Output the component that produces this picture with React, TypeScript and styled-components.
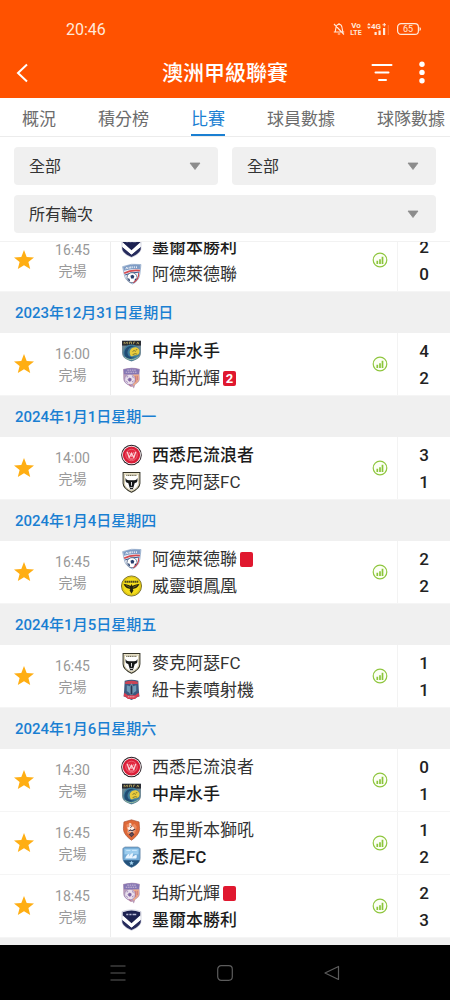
import React, { useLayoutEffect, useRef, useState } from "react";
import styled, { createGlobalStyle } from "styled-components";

const GlobalStyle = createGlobalStyle`
  *, *::before, *::after { box-sizing: border-box; }
  html, body, #root { height: 100%; }
  body {
    margin: 0;
    background: #fff;
    color: #222;
    font-family: Roboto, "Noto Sans CJK TC", sans-serif;
  }
  button, select { font-family: inherit; color: inherit; }
  button { border: 0; padding: 0; background: none; cursor: pointer; }
`;

const Screen = styled.div`
  display: flex;
  flex-direction: column;
  height: 100%;
  min-height: 480px;
`;

const Header = styled.header`
  flex: none;
  background: #ff5200;
  color: #fff;
`;

const StatusBar = styled.div`
  display: flex;
  align-items: center;
  justify-content: space-between;
  height: 48px;
  padding: 10px 28px 0 66px;
  font-size: 16px;
  color: #ffe9da;
`;

const StatusIcons = styled.div`
  display: flex;
  align-items: center;
  gap: 5px;
`;

const AppBar = styled.div`
  display: grid;
  grid-template-columns: 88px 1fr 88px;
  align-items: center;
  height: 50px;
`;

const Title = styled.h1`
  margin: 0;
  font-size: 21px;
  line-height: 28px;
  font-weight: 500;
  text-align: center;
  white-space: nowrap;
`;

const BarActions = styled.div<{ $end?: boolean }>`
  display: flex;
  align-items: center;
  justify-content: ${(p) => (p.$end ? "flex-end" : "flex-start")};
  gap: 17px;
  padding: 0 16px;
`;

const IconButton = styled.button`
  display: flex;
  align-items: center;
  justify-content: center;
  flex: none;
`;

const Tabs = styled.nav`
  display: flex;
  flex: none;
  gap: 42px;
  height: 39px;
  padding: 0 22px;
  overflow: hidden;
  border-bottom: 1px solid #ececec;
`;

const Tab = styled.a<{ $active?: boolean }>`
  flex: none;
  height: 39px;
  padding-top: 9px;
  font-size: 17px;
  line-height: 24px;
  text-decoration: none;
  color: ${(p) => (p.$active ? "#1a7fd2" : "#6c6c6c")};
  border-bottom: 3px solid ${(p) => (p.$active ? "#1a7fd2" : "transparent")};
`;

const Filters = styled.form`
  display: grid;
  grid-template-columns: 1fr 1fr;
  flex: none;
  gap: 10px 14px;
  padding: 10px 14px 8px;
  border-bottom: 1px solid #f2f2f2;
`;

const SelectBox = styled.label<{ $wide?: boolean }>`
  display: grid;
  grid-template-columns: 1fr 46px;
  align-items: center;
  grid-column: ${(p) => (p.$wide ? "1 / -1" : "auto")};
  height: 38px;
  border-radius: 4px;
  background: #f0f0f0;

  svg {
    grid-area: 1 / 2;
    justify-self: center;
    pointer-events: none;
  }
`;

const Select = styled.select`
  grid-area: 1 / 1 / 2 / 3;
  width: 100%;
  height: 38px;
  padding: 0 15px;
  border: 0;
  background: transparent;
  appearance: none;
  font-size: 16px;
  color: #333;
`;

const MatchList = styled.main`
  flex: 1;
  min-height: 0;
  overflow-y: auto;
  scrollbar-width: none;
  padding-bottom: 8px;
  background: #f0f0f0;
`;

const DateHeading = styled.h2`
  margin: 0;
  height: 41px;
  padding: 1px 15px 0;
  font-size: 15px;
  line-height: 41px;
  font-weight: 500;
  color: #1a7fd2;
  background: #f0f0f0;
`;

const MatchRow = styled.article`
  display: grid;
  grid-template-columns: 48px 62px 1fr 34px 53px;
  height: 63px;
  background: #fff;
  border-bottom: 1px solid #f5f5f5;
`;

const Centered = styled.div`
  display: flex;
  align-items: center;
  justify-content: center;
`;

const Kickoff = styled.div`
  padding: 11px 13px 0 0;
  font-size: 14px;
  line-height: 21px;
  text-align: center;
  color: #999;
`;

const Teams = styled.div`
  padding: 5px 0 0 10px;
  border-left: 1px solid #ededed;
`;

const Team = styled.div<{ $winner?: boolean }>`
  display: flex;
  align-items: center;
  height: 27px;
  font-size: 17px;
  line-height: 27px;
  white-space: nowrap;
  color: ${(p) => (p.$winner ? "#1c1c1c" : "#333")};
  font-weight: ${(p) => (p.$winner ? 500 : 400)};

  svg { flex: none; margin: 0 10px 2px 0; }
`;

const RedCard = styled.span`
  display: block;
  width: 13px;
  height: 15px;
  margin-left: 3px;
  border-radius: 2px;
  background: #e0182f;
  color: #fff;
  font-size: 13px;
  line-height: 15px;
  font-weight: 700;
  text-align: center;
`;

const Scores = styled.div`
  padding-top: 5px;
  border-left: 1px solid #f3f3f3;
  font-size: 17px;
  line-height: 27px;
  font-weight: 500;
  text-align: center;
  color: #222;
`;

const SystemNav = styled.footer`
  display: grid;
  grid-template-columns: repeat(3, 107px);
  justify-content: center;
  align-items: center;
  flex: none;
  height: 55px;
  background: #000;
`;

type Crest =
  | "victory" | "adelaide" | "mariners" | "perth" | "wanderers"
  | "macarthur" | "wellington" | "jets" | "roar" | "sydney";

const SHIELD = "M2 1h16v10c0 4-3 6.500-8 8.700C5 17.500 2 15 2 11z";

const crests: Record<Crest, React.ReactNode> = {
  victory: (
    <>
      <path d="M1 2Q10-1.200 19 2V11c0 4-4 6.800-9 8.800C5 17.800 1 15 1 11z" fill="#f6f6fa" stroke="#a9abc2" strokeWidth=".5" />
      <path d="M1.700 2.500Q10-.5 18.300 2.500v4L10 14 1.700 6.500z" fill="#1c2150" />
      <path d="M1.200 9.800l8.800 7.400 8.800-7.400v2.400c-1 3.500-4.800 5.600-8.800 7.400-4-1.800-7.800-3.900-8.800-7.400z" fill="#262b5c" />
      <path d="M1.500 5.500l8.500 7.500 8.500-7.500V10L10 17.200 1.500 10z" fill="#fff" />
      <path d="M5 4.800h2m1 0h2m1 0h3.500" stroke="#b9bdd8" strokeWidth="1.400" />
    </>
  ),
  adelaide: (
    <>
      <path d="M1.500 3q8.500-3.500 17.500-2l-1 9c-.6 5-3.500 7.800-7 9.500C7 17.500 3.800 15.500 3 10z" fill="#eef2f8" stroke="#8ba3c4" strokeWidth=".7" />
      <path d="M2 3.300q8-3.300 16.500-1.800l-.3 4q-8-1-15.400 1.500z" fill="#7f9cc5" />
      <path d="M4.500 5.500l1-2 1.100 1.700m1.200-.3V3.100m1.400 1.600V2.800m1.500 1.600V2.700m2 1.700V2.700m2 1.700V2.700" stroke="#fff" strokeWidth=".8" fill="none" />
      <path d="M3 9.300q6.500-3.500 15-2.500" stroke="#d64b50" strokeWidth="1.600" fill="none" />
      <path d="M4 11q6-3 13.500-2.700" stroke="#37598d" strokeWidth="1" fill="none" />
      <circle cx="10.500" cy="13.500" r="4.800" fill="#fff" stroke="#536685" strokeWidth=".8" />
      <path d="M9 11.700l2-1 1.700 1.300-.7 2.200H9.600zM6.300 14l1.800.5.500 2-1 .5zM14.700 14l-1.500.8-.3 2 1.200-.5z" fill="#253e6d" />
      <path d="M16.800 9c.4 4-1.500 7-5 9.300" stroke="#c9464f" strokeWidth="1" fill="none" />
    </>
  ),
  mariners: (
    <>
      <path d="M1 .3h18V12c0 4-4 6.700-9 8C5 18.700 1 16 1 12z" fill="#6d8794" />
      <path d="M1 .3h18v4.500H1z" fill="#27292f" />
      <path d="M3 3.500V1.500l1.500 1.200L6 1.500v2m2 0v-2h2v2m2 0v-2h1.500m1.500 2l1-2 1 2" stroke="#c9b765" strokeWidth=".7" fill="none" />
      <circle cx="10" cy="11.500" r="7.800" fill="#3e7d9b" />
      <path d="M3.500 14C2 7.500 8 3.200 13.500 5.700c-4-.2-7 2-7.300 5.600-.3 3.200 3 5.700 6.800 4.700-3 2.500-8 1.500-9.500-2z" fill="#214c74" />
      <path d="M8.500 12.500c-1-4 3-7 6.500-5.800 2.700 1 3.300 4 2 6-1.700 2.400-4.200.6-6 2.300-1.500.4-2.300-.8-2.500-2.500z" fill="#e9cc3d" />
      <path d="M11 10.500l1.500-1 1.500 1m-3 3l2.500-1 2 .6m-1.500-4l1.500-.5" stroke="#7b772f" strokeWidth=".9" fill="none" />
      <path d="M4 16c3 3 9 3 12.500-.7" stroke="#a3bfa0" strokeWidth=".9" fill="none" />
    </>
  ),
  perth: (
    <>
      <path d="M2 1.500Q6 .3 10 .2t8 1.300l-.5 3.500.3 6c0 3-2.800 4-4.300 5.500L12.300 20l-1.500-2-1.800.3C7 16.500 2.500 15 2.200 11z" fill="#b99ab8" />
      <path d="M2.500 2Q10-.5 17.500 2l-.3 4.500H2.800z" fill="#8577b4" />
      <path d="M4.500 4.500h11M6 2.500h8" stroke="#dcc9df" strokeWidth=".8" strokeDasharray="1.500 .7" />
      <path d="M11 7l6-.3v4.800c-.5 3-3.700 4-4.500 6l-2-2z" fill="#efac87" />
      <circle cx="8.500" cy="11.500" r="5" fill="#eadfeb" stroke="#9a86b5" strokeWidth=".7" />
      <path d="M8 10l1.700.7-.2 2-1.800.3-1-1.600zM5.500 9l1.300-.3m3.700-.2l1.500 1.200M5 13l1.500 1.300m4-.5l1.500-1" fill="#7c64a3" stroke="#7c64a3" strokeWidth=".7" />
      <path d="M14 8v6m1.500-6v4m-8 4l2.500 2" stroke="#bd657a" strokeWidth=".7" fill="none" />
    </>
  ),
  wanderers: (
    <>
      <circle cx="10" cy="10" r="9.800" fill="#291c23" />
      <circle cx="10" cy="10" r="8.900" fill="#fff" />
      <circle cx="10" cy="10" r="8.200" fill="#d91c36" />
      <circle cx="10" cy="10" r="5.500" fill="#e3273f" stroke="#f07685" strokeWidth=".7" />
      <path d="M6 7l1.800 5.500L10 8.500l2.200 4L14 7" stroke="#fbd3d8" strokeWidth="1.300" fill="none" />
      <path d="M8 7.500l2 4 2-4M8.300 13.800h3.400" stroke="#f9b6bf" strokeWidth=".8" fill="none" />
    </>
  ),
  macarthur: (
    <>
      <path d={SHIELD} fill="#f4eed7" stroke="#353428" strokeWidth="1" />
      <path d="M3.300 2.500h13.400V11c0 3.300-2.700 5.500-6.700 7.300C6 16.500 3.300 14.300 3.300 11z" fill="#fff" stroke="#beb187" strokeWidth=".6" />
      <path d="M5 3.700h10" stroke="#777255" strokeWidth="1.100" strokeDasharray="1.200 .5" />
      <path d="M4.600 6c.2 1.800 1.200 2.300 3 2.300h4.800c1.800 0 2.800-.5 3-2.300.9 3-.1 4.700-2.300 4.900L12 14.500l-.7 2.500H8.700L8 14.500l-1.100-3.600C4.700 10.700 3.700 9 4.600 6z" fill="#161819" />
      <path d="M10 10v3.500m-1.200 1.800h2.400" stroke="#fff" strokeWidth=".8" />
    </>
  ),
  wellington: (
    <>
      <circle cx="10" cy="10" r="9.600" fill="#e8ce16" stroke="#575116" strokeWidth=".7" />
      <circle cx="10" cy="10" r="8.200" fill="#f4dd1c" stroke="#c7b118" strokeWidth=".4" />
      <path d="M3.500 6h13" stroke="#49451b" strokeWidth="2" strokeDasharray="1.500 .4" />
      <path d="M2.500 8c3 .1 5 .9 6.500 2l1-2 1 2c1.500-1.100 3.500-1.900 6.500-2-1 2.700-2.500 3.800-4.500 4.300l-1.800.5.600 1.500-1.800 3-1.800-3 .6-1.500-1.800-.5C5 11.800 3.500 10.700 2.500 8z" fill="#25230f" />
      <path d="M5 9.500l3.500 1.800m6.500-1.800l-3.500 1.800" stroke="#b3a122" strokeWidth=".5" />
    </>
  ),
  jets: (
    <>
      <path d="M3.500 1.200Q10-.8 16.500 1.200l.5 9.300.5 5.500-2 .8L10 19.500l-5.500-2.700-2-.8.500-5.500z" fill="#3d5a80" />
      <path d="M4 2.200q6-2 12 0v2H4z" fill="#ca4455" />
      <path d="M5.500 5.500l3 1V13l-3-2zm9 0l-3 1V13l3-2z" fill="#6e9bb9" />
      <path d="M10 4l1.200 3v6.500L10 15l-1.200-1.500V7z" fill="#273553" stroke="#91b4c6" strokeWidth=".6" />
      <path d="M3.200 12.500L6.500 15h7l3.300-2.500.7 3.700-2 .2L13.500 18.500h-7l-2-2.100-2-.2z" fill="#d93f51" />
      <path d="M6.500 16.500h7" stroke="#f6bbc2" strokeWidth=".9" strokeDasharray="1.200 .5" />
    </>
  ),
  roar: (
    <>
      <path d="M2.800 2.300L10 .3l7.200 2 .5 6.200c0 5-4 8.500-7.700 11.300-3.700-2.800-7.700-6.300-7.700-11.300z" fill="#df6938" stroke="#a64c30" strokeWidth=".6" />
      <path d="M5 5l4-2 1.500 2.500L13 4l2 3-1.500 5.500L10 17l-3.500-3.500z" fill="#eb8b61" />
      <path d="M8 3l2 1-.5 2.200 2.500 1 1.500 3-1.700-.3-.3 2.600-2.500-1-2.800.8 1-2.800-1.500-1.700 2.300-.6z" fill="#fff0e8" />
      <path d="M7 11.300l2-1.500 1.500 1 3-1.800m-3 3.300l1.500 2-2 2-2-2z" stroke="#4e3b44" strokeWidth="1" fill="#6f5361" />
      <path d="M9 5.500l1 1-1 1.500" stroke="#4d464f" strokeWidth=".9" fill="none" />
    </>
  ),
  sydney: (
    <>
      <path d="M1.800 1.800l2-1.300h12.400l2 1.300V11c0 4-3.500 7-8.200 8.900C5.300 18 1.800 15 1.800 11z" fill="#71a9d5" stroke="#5c7d9c" strokeWidth=".6" />
      <path d="M3.300 2.200h13.400v5.300H3.300z" fill="#9dcdee" />
      <path d="M5 3.700h4m1.500 0H15" stroke="#d9f0ff" strokeWidth=".8" />
      <path d="M4 11.500c.5-2.500 2-4.200 4-4.700 0 1.700-.7 3.200-1.300 4.700 1-2.700 2.500-4.700 4.500-5.200.5 2-.3 3.700-1 5.200 1-2.200 2.500-3.400 4.500-3.700.7 1.500.2 2.700-.2 3.700z" fill="#e9f5ff" />
      <path d="M2.300 13h15.400c-1 3.200-4.200 5.200-7.700 6.700-3.500-1.500-6.700-3.500-7.700-6.700z" fill="#24527b" />
      <path d="M10 13.500l.6 1.500 1.600.1-1.200 1 .4 1.600-1.400-.9-1.400.9.400-1.600-1.200-1 1.600-.1z" fill="#a7d6f3" />
    </>
  ),
};

const CrestIcon = ({ name }: { name: Crest }) => (
  <svg width="21" height="22" viewBox="0 0 20 20" aria-hidden="true">
    {crests[name]}
  </svg>
);

const Star = () => (
  <svg width="20" height="20" viewBox="0 0 20 20" aria-hidden="true">
    <path d="M10 0l2.700 6.900 7.300.5-5.600 4.700L16.200 19 10 15.200 3.800 19l1.800-6.900L0 7.400l7.300-.5z" fill="#ffae13" />
  </svg>
);

const StatsIcon = () => (
  <svg width="16" height="16" viewBox="0 0 16 16" aria-hidden="true">
    <circle cx="8" cy="8" r="6.800" fill="#fcfff5" stroke="#8fc63f" strokeWidth="1.200" />
    <path d="M5.300 8.700V12M8 7.200V12M10.500 4.700V12" stroke="#8ac53a" strokeWidth="1.700" />
  </svg>
);

const Caret = () => (
  <svg width="12" height="8" viewBox="0 0 12 8" aria-hidden="true">
    <path d="M1 1h10L6 7.500z" fill="#8c8c8c" stroke="#8c8c8c" strokeWidth=".8" strokeLinejoin="round" />
  </svg>
);

const MutedBell = () => (
  <svg width="12" height="14" viewBox="0 0 12 14" fill="none" stroke="#ffe9da" strokeWidth="1.100" aria-hidden="true">
    <path d="M2.200 9.800L3 5.500Q3.500 2.500 6 2.300 8.700 2.500 9 5.500l.8 4.300M.8 10h10.400M4.800 12h2.400M6 1v1.300M1 2l10 10.500" />
  </svg>
);

const VoLte = () => (
  <svg width="12" height="14" viewBox="0 0 12 14" role="img" aria-label="VoLTE" fill="#ffe9da" fontFamily="Roboto, sans-serif" fontWeight="700">
    <text x="6" y="6" fontSize="8" textAnchor="middle">Vo</text>
    <text x="6" y="13" fontSize="7" textAnchor="middle">LTE</text>
  </svg>
);

const Signal = () => (
  <svg width="24" height="14" viewBox="0 0 24 14" fill="#ffe9da" aria-label="4G+" role="img" fontFamily="Roboto, sans-serif" fontWeight="700">
    <path d="M0 3.200L1.900 1l1.900 2.200zM0 4.800L1.900 7l1.900-2.200z" />
    <text x="4" y="6.500" fontSize="8">4G</text>
    <path d="M15.500 2.200h1.300V1h1v1.200H19v1h-1.200v1.200h-1V3.200h-1.300zM7.500 10h2.200v3H7.500zM11.500 8.500h2.200V13h-2.200zM16 6h2.200v7H16z" />
    <path d="M20.800 3h1v10h-1z" opacity=".3" />
  </svg>
);

const Battery = () => (
  <svg width="26" height="14" viewBox="0 0 26 14" role="img" aria-label="65" fontFamily="Roboto, sans-serif">
    <rect x="1.600" y="1.600" width="20.800" height="10.800" rx="3.500" fill="none" stroke="#ffe9da" strokeWidth="1.200" />
    <path d="M23.500 5q1.500.5 1.500 2t-1.500 2z" fill="#ffe9da" />
    <text x="12" y="10" fontSize="9" textAnchor="middle" fill="#ffe9da">65</text>
  </svg>
);

interface Side { name: string; crest: Crest; score: number; winner?: boolean; reds?: number }
interface Match { time: string; sides: [Side, Side] }
interface Day { date?: string; matches: Match[] }

const side = (name: string, crest: Crest, score: number, winner = false, reds = 0): Side =>
  ({ name, crest, score, winner, reds });

const days: Day[] = [
  { matches: [{ time: "16:45", sides: [side("墨爾本勝利", "victory", 2, true), side("阿德萊德聯", "adelaide", 0)] }] },
  { date: "2023年12月31日星期日", matches: [{ time: "16:00", sides: [side("中岸水手", "mariners", 4, true), side("珀斯光輝", "perth", 2, false, 2)] }] },
  { date: "2024年1月1日星期一", matches: [{ time: "14:00", sides: [side("西悉尼流浪者", "wanderers", 3, true), side("麥克阿瑟FC", "macarthur", 1)] }] },
  { date: "2024年1月4日星期四", matches: [{ time: "16:45", sides: [side("阿德萊德聯", "adelaide", 2, false, 1), side("威靈頓鳳凰", "wellington", 2)] }] },
  { date: "2024年1月5日星期五", matches: [{ time: "16:45", sides: [side("麥克阿瑟FC", "macarthur", 1), side("紐卡素噴射機", "jets", 1)] }] },
  {
    date: "2024年1月6日星期六",
    matches: [
      { time: "14:30", sides: [side("西悉尼流浪者", "wanderers", 0), side("中岸水手", "mariners", 1, true)] },
      { time: "16:45", sides: [side("布里斯本獅吼", "roar", 1), side("悉尼FC", "sydney", 2, true)] },
      { time: "18:45", sides: [side("珀斯光輝", "perth", 2, false, 1), side("墨爾本勝利", "victory", 3, true)] },
    ],
  },
];

const tabs = ["概況", "積分榜", "比賽", "球員數據", "球隊數據"];

const MatchItem = ({ match }: { match: Match }) => (
  <MatchRow>
    <IconButton type="button" aria-pressed="true"><Star /></IconButton>
    <Kickoff>
      <div>{match.time}</div>
      <div>完場</div>
    </Kickoff>
    <Teams>
      {match.sides.map((s) => (
        <Team key={s.name} $winner={s.winner}>
          <CrestIcon name={s.crest} />
          {s.name}
          {s.reds ? <RedCard>{s.reds > 1 ? s.reds : null}</RedCard> : null}
        </Team>
      ))}
    </Teams>
    <Centered><StatsIcon /></Centered>
    <Scores>
      {match.sides.map((s) => <div key={s.name}>{s.score}</div>)}
    </Scores>
  </MatchRow>
);

const Filter = ({ label, wide }: { label: string; wide?: boolean }) => (
  <SelectBox $wide={wide}>
    <Select defaultValue={label}><option>{label}</option></Select>
    <Caret />
  </SelectBox>
);

export default function App() {
  const list = useRef<HTMLElement>(null);
  const [active, setActive] = useState("比賽");

  // Open the list slightly scrolled, with the earlier match partly under the filters.
  useLayoutEffect(() => {
    if (list.current) list.current.scrollTop = 13;
  }, []);

  return (
    <Screen>
      <GlobalStyle />
      <Header>
        <StatusBar>
          <span>20:46</span>
          <StatusIcons><MutedBell /><VoLte /><Signal /><Battery /></StatusIcons>
        </StatusBar>
        <AppBar>
          <BarActions>
            <IconButton type="button">
              <svg width="12" height="20" viewBox="0 0 12 20" fill="none" stroke="#fff" strokeWidth="2" aria-hidden="true">
                <path d="M11 1.500L2 10l9 8.500" />
              </svg>
            </IconButton>
          </BarActions>
          <Title>澳洲甲級聯賽</Title>
          <BarActions $end>
            <IconButton type="button">
              <svg width="22" height="20" viewBox="0 0 22 20" stroke="#fff" strokeWidth="2" strokeLinecap="round" aria-hidden="true">
                <path d="M1.500 2h19M4.500 9.500h13M8 17h7" />
              </svg>
            </IconButton>
            <IconButton type="button">
              <svg width="24" height="24" viewBox="0 0 24 24" fill="#fff" aria-hidden="true">
                <circle cx="12" cy="3.200" r="2.700" /><circle cx="12" cy="11.400" r="2.700" /><circle cx="12" cy="19.700" r="2.700" />
              </svg>
            </IconButton>
          </BarActions>
        </AppBar>
      </Header>
      <Tabs>
        {tabs.map((t) => (
          <Tab key={t} href="#" $active={t === active} onClick={(e) => { e.preventDefault(); setActive(t); }}>{t}</Tab>
        ))}
      </Tabs>
      <Filters>
        <Filter label="全部" />
        <Filter label="全部" />
        <Filter label="所有輪次" wide />
      </Filters>
      <MatchList ref={list}>
        {days.map((day, i) => (
          <section key={i}>
            {day.date && <DateHeading>{day.date}</DateHeading>}
            {day.matches.map((m, j) => <MatchItem key={j} match={m} />)}
          </section>
        ))}
      </MatchList>
      <SystemNav>
        <Centered as="button" type="button">
          <svg width="18" height="18" viewBox="0 0 18 18" stroke="#5c5c5c" strokeWidth="1.200" aria-hidden="true">
            <path d="M1.500 2h15M1.500 9h15M1.500 16h15" />
          </svg>
        </Centered>
        <Centered as="button" type="button">
          <svg width="18" height="18" viewBox="0 0 18 18" fill="none" stroke="#5c5c5c" strokeWidth="1.200" aria-hidden="true">
            <rect x="1.700" y="1.700" width="14.600" height="14.600" rx="3.500" />
          </svg>
        </Centered>
        <Centered as="button" type="button">
          <svg width="18" height="18" viewBox="0 0 18 18" fill="none" stroke="#5c5c5c" strokeWidth="1.200" strokeLinejoin="round" aria-hidden="true">
            <path d="M15.500 2.500v13L2 9z" />
          </svg>
        </Centered>
      </SystemNav>
    </Screen>
  );
}
